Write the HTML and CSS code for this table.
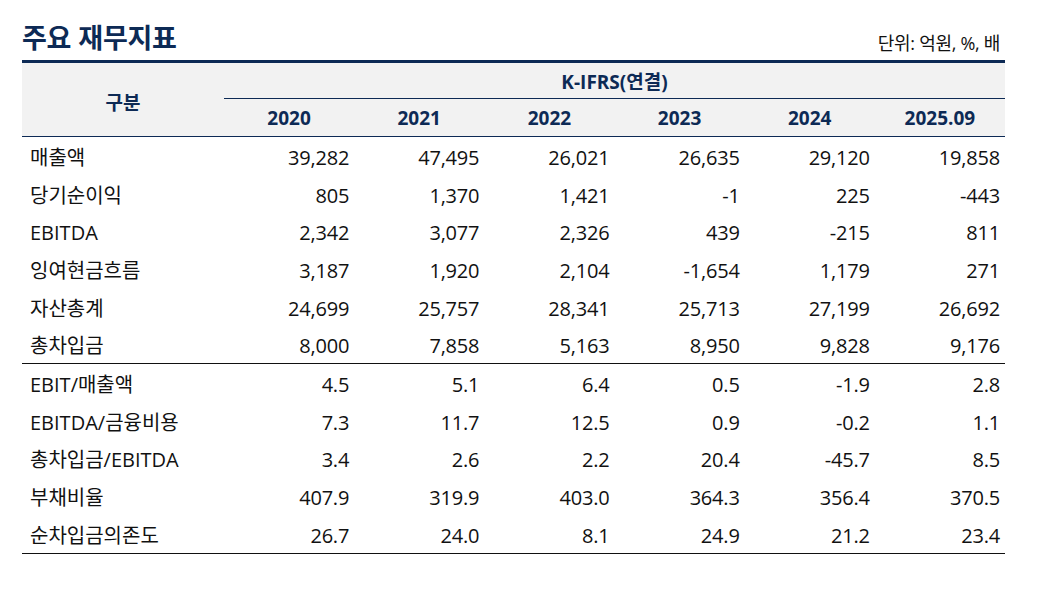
FILE: index.html
```html
<!DOCTYPE html>
<html lang="ko">
<head>
<meta charset="utf-8">
<link rel="stylesheet" href="styles.css">
</head>
<body>
<div class="page">
  <div class="top">
    <h1 class="title">주요 재무지표</h1>
    <span class="unit">단위: 억원, %, 배</span>
  </div>
  <table class="fin">
    <colgroup>
      <col class="c-label">
      <col class="c-num"><col class="c-num"><col class="c-num"><col class="c-num"><col class="c-num"><col class="c-num">
    </colgroup>
    <thead>
      <tr class="h1">
        <th rowspan="2" class="gubun">구분</th>
        <th colspan="6" class="ifrs">K-IFRS(연결)</th>
      </tr>
      <tr class="h2">
        <th>2020</th><th>2021</th><th>2022</th><th>2023</th><th>2024</th><th>2025.09</th>
      </tr>
    </thead>
    <tbody>
      <tr><td class="lab">매출액</td><td>39,282</td><td>47,495</td><td>26,021</td><td>26,635</td><td>29,120</td><td>19,858</td></tr>
      <tr><td class="lab">당기순이익</td><td>805</td><td>1,370</td><td>1,421</td><td>-1</td><td>225</td><td>-443</td></tr>
      <tr><td class="lab">EBITDA</td><td>2,342</td><td>3,077</td><td>2,326</td><td>439</td><td>-215</td><td>811</td></tr>
      <tr><td class="lab">잉여현금흐름</td><td>3,187</td><td>1,920</td><td>2,104</td><td>-1,654</td><td>1,179</td><td>271</td></tr>
      <tr><td class="lab">자산총계</td><td>24,699</td><td>25,757</td><td>28,341</td><td>25,713</td><td>27,199</td><td>26,692</td></tr>
      <tr class="sep"><td class="lab">총차입금</td><td>8,000</td><td>7,858</td><td>5,163</td><td>8,950</td><td>9,828</td><td>9,176</td></tr>
      <tr><td class="lab">EBIT/매출액</td><td>4.5</td><td>5.1</td><td>6.4</td><td>0.5</td><td>-1.9</td><td>2.8</td></tr>
      <tr><td class="lab">EBITDA/금융비용</td><td>7.3</td><td>11.7</td><td>12.5</td><td>0.9</td><td>-0.2</td><td>1.1</td></tr>
      <tr><td class="lab">총차입금/EBITDA</td><td>3.4</td><td>2.6</td><td>2.2</td><td>20.4</td><td>-45.7</td><td>8.5</td></tr>
      <tr><td class="lab">부채비율</td><td>407.9</td><td>319.9</td><td>403.0</td><td>364.3</td><td>356.4</td><td>370.5</td></tr>
      <tr class="last"><td class="lab">순차입금의존도</td><td>26.7</td><td>24.0</td><td>8.1</td><td>24.9</td><td>21.2</td><td>23.4</td></tr>
    </tbody>
  </table>
</div>
</body>
</html>
```
FILE: styles.css
```css
html, body {
  margin: 0;
  padding: 0;
  background: #ffffff;
}
body {
  font-family: "Open Sans", "Noto Sans CJK KR", sans-serif;
  color: #111111;
}
.page {
  width: 983px;
  margin-left: 22px;
}
.top {
  height: 60px;
  display: flex;
  justify-content: space-between;
  align-items: flex-end;
}
.title {
  margin: 0 0 7px 0;
  font-family: "Noto Sans CJK KR", sans-serif;
  font-size: 27px;
  font-weight: 700;
  line-height: 32px;
  color: #0d2a55;
  letter-spacing: -0.3px;
}
.unit {
  font-family: "Open Sans", "Noto Sans CJK KR", sans-serif;
  font-size: 18px;
  line-height: 22px;
  margin: 0 5px 6px 0;
  color: #111111;
  letter-spacing: -0.3px;
}
.fin {
  width: 983px;
  border-collapse: collapse;
  table-layout: fixed;
  border-top: 3px solid #0d2a55;
}
.c-label { width: 202px; }
.c-num { width: 130.17px; }
thead th {
  background: #f2f2f2;
  color: #0d2a55;
  font-weight: 700;
  font-size: 19px;
  padding: 0;
  font-family: "Open Sans", "Noto Sans CJK KR", sans-serif;
}
.h1 th { height: 35px; }
.h2 th {
  height: 37px;
  border-top: 1px solid #0d2a55;
  border-bottom: 1px solid #0d2a55;
}
.gubun {
  border-bottom: 1px solid #0d2a55;
  padding-top: 4px;
}
.ifrs { vertical-align: middle; }
tbody td {
  height: 33.7px;
  padding: 4px 5px 0 0;
  text-align: right;
  font-size: 20px;
  line-height: 24px;
  font-weight: 400;
  color: #111111;
  letter-spacing: -0.2px;
}
tbody td.lab {
  text-align: left;
  padding-left: 8px;
  font-family: "Open Sans", "Noto Sans CJK KR", sans-serif;
  letter-spacing: 0;
}
tr.sep td { border-bottom: 1px solid #111111; }
tr.last td { border-bottom: 1px solid #111111; }
```
